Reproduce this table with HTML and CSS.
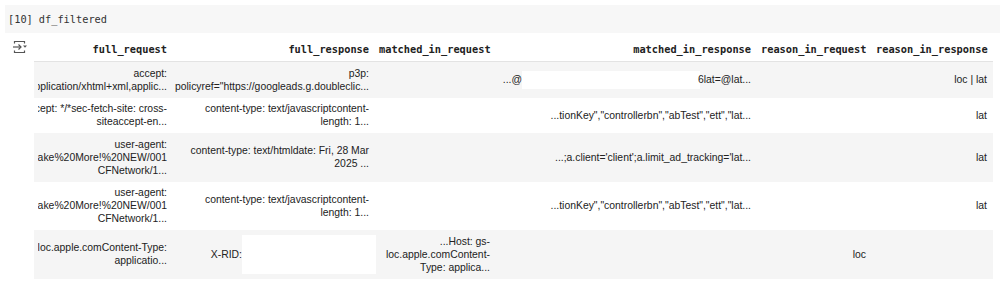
FILE: index.html
```html
<!DOCTYPE html>
<html>
<head>
<meta charset="utf-8">
<link rel="stylesheet" href="styles.css">
</head>
<body>
<div class="code-cell">
  <span class="prompt">[10]</span>
  <span class="code">df_filtered</span>
</div>
<div class="output">
  <div class="toggle">
    <svg width="16" height="14" viewBox="0 0 16 14">
      <path d="M2.5 3.5 V1.5 H12.5 V3.5" fill="none" stroke="#555" stroke-width="1.2"/>
      <path d="M2.5 10.5 V12.5 H12.5 V10.5" fill="none" stroke="#555" stroke-width="1.2"/>
      <path d="M1 7 H9" fill="none" stroke="#555" stroke-width="1.2"/>
      <path d="M6.5 4.5 L9 7 L6.5 9.5" fill="none" stroke="#555" stroke-width="1.2"/>
      <path d="M11 5.5 H15 L13 7.8 Z" fill="#555"/>
    </svg>
  </div>
  <table class="df">
    <colgroup>
      <col class="c1"><col class="c2"><col class="c3"><col class="c4"><col class="c5"><col class="c6">
    </colgroup>
    <thead>
      <tr>
        <th>full_request</th>
        <th>full_response</th>
        <th>matched_in_request</th>
        <th>matched_in_response</th>
        <th>reason_in_request</th>
        <th>reason_in_response</th>
      </tr>
    </thead>
    <tbody>
      <tr class="odd">
        <td><div class="clip"><span class="in">accept:<br>text/html,application/xhtml+xml,applic...</span></div></td>
        <td><div class="clip"><span class="in">p3p:<br>policyref="https://googleads.g.doubleclic...</span></div></td>
        <td></td>
        <td><div class="clip"><span class="in">...@<span class="redact r1"></span>6lat=@lat...</span></div></td>
        <td></td>
        <td><div class="clip"><span class="in">loc | lat</span></div></td>
      </tr>
      <tr>
        <td><div class="clip"><span class="in">accept: */*sec-fetch-site: cross-<br>siteaccept-en...</span></div></td>
        <td><div class="clip"><span class="in">content-type: text/javascriptcontent-<br>length: 1...</span></div></td>
        <td></td>
        <td><div class="clip"><span class="in">...tionKey","controllerbn","abTest","ett","lat...</span></div></td>
        <td></td>
        <td><div class="clip"><span class="in">lat</span></div></td>
      </tr>
      <tr class="odd">
        <td><div class="clip"><span class="in">user-agent:<br>%20Make%20More!%20NEW/001<br>CFNetwork/1...</span></div></td>
        <td><div class="clip"><span class="in">content-type: text/htmldate: Fri, 28 Mar<br>2025 ...</span></div></td>
        <td></td>
        <td><div class="clip"><span class="in">...;a.client='client';a.limit_ad_tracking='lat...</span></div></td>
        <td></td>
        <td><div class="clip"><span class="in">lat</span></div></td>
      </tr>
      <tr>
        <td><div class="clip"><span class="in">user-agent:<br>%20Make%20More!%20NEW/001<br>CFNetwork/1...</span></div></td>
        <td><div class="clip"><span class="in">content-type: text/javascriptcontent-<br>length: 1...</span></div></td>
        <td></td>
        <td><div class="clip"><span class="in">...tionKey","controllerbn","abTest","ett","lat...</span></div></td>
        <td></td>
        <td><div class="clip"><span class="in">lat</span></div></td>
      </tr>
      <tr class="odd">
        <td><div class="clip"><span class="in">Host: gs-loc.apple.comContent-Type:<br>applicatio...</span></div></td>
        <td><div class="clip"><span class="in">X-RID:</span><span class="redact r5"></span></div></td>
        <td><div class="clip"><span class="in">...Host: gs-<br>loc.apple.comContent-<br>Type: applica...</span></div></td>
        <td></td>
        <td><div class="clip"><span class="in">loc</span></div></td>
        <td></td>
      </tr>
    </tbody>
  </table>
</div>
</body>
</html>
```

FILE: styles.css
```css
html, body {
  margin: 0;
  padding: 0;
  background: #ffffff;
}

body {
  font-family: "Liberation Sans", Arial, sans-serif;
  color: #222222;
}

.code-cell {
  margin: 5px 0 0 5px;
  height: 28px;
  background: #f7f7f7;
  display: flex;
  align-items: center;
  gap: 6px;
  padding-left: 3px;
  font-family: "DejaVu Sans Mono", monospace;
  font-size: 10.3px;
  color: #333333;
}

.output {
  display: flex;
  align-items: flex-start;
  padding: 5px 0 0 12px;
  gap: 6px;
}

.toggle {
  width: 16px;
  height: 14px;
  margin-top: 2px;
  flex: none;
}

.toggle svg {
  display: block;
}

.df {
  border-collapse: collapse;
  table-layout: fixed;
  width: 959px;
  font-size: 10.4px;
  line-height: 13px;
}

.c1 { width: 139px; }
.c2 { width: 202px; }
.c3 { width: 121px; }
.c4 { width: 261px; }
.c5 { width: 115px; }
.c6 { width: 121px; }

.df th {
  font-family: "DejaVu Sans Mono", monospace;
  font-size: 10.3px;
  font-weight: bold;
  color: #212121;
  text-align: right;
  padding: 5px 6px 5px 4px;
  line-height: 13px;
  border-bottom: 1px solid #e3e3e3;
  white-space: nowrap;
}

.df td {
  padding: 4.5px 6px 5px 4px;
  text-align: right;
  vertical-align: middle;
}

.df tr.odd td {
  background: #f5f5f5;
}

.clip {
  display: flex;
  justify-content: flex-end;
  align-items: center;
}

.df td:first-child .clip {
  overflow: hidden;
}

.in {
  flex: none;
  white-space: nowrap;
  text-align: right;
}

.redact {
  display: inline-block;
  background: #ffffff;
  vertical-align: middle;
}

.r1 {
  width: 178px;
  height: 18px;
  margin-right: -2px;
}

.r5 {
  flex: none;
  width: 134px;
  height: 39px;
  margin-right: -7px;
}
```
